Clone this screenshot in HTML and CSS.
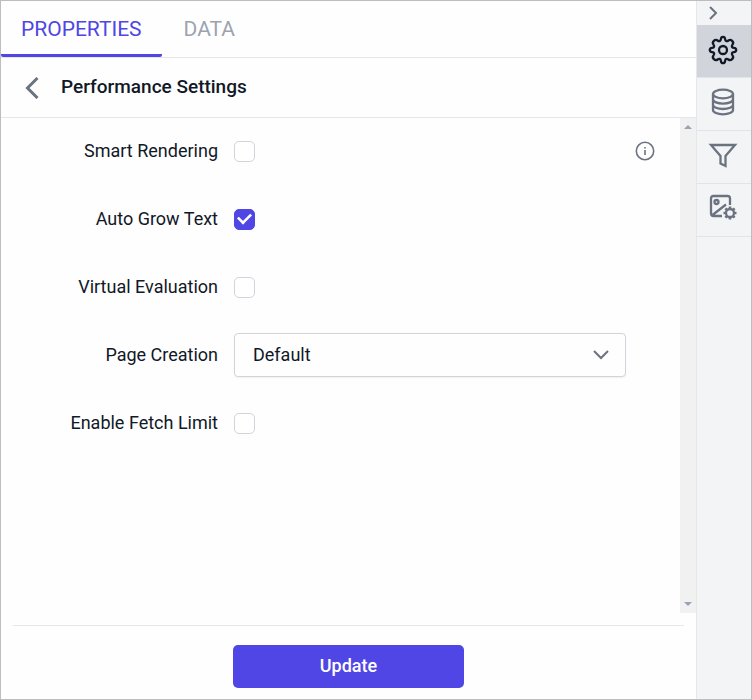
FILE: index.html
```
<!DOCTYPE html>
<html lang="en">

<head>
    <meta charset="utf-8">
    <title>Performance Settings</title>
    <link rel="stylesheet" href="styles.css">
</head>

<body>
<div class="designer">
    <main class="panel">
        <nav class="tabs">
            <button type="button" class="tab active">PROPERTIES</button>
            <button type="button" class="tab">DATA</button>
        </nav>
        <header class="panel-header">
            <button type="button" class="back" aria-label="Back">
                <svg width="14" height="22" viewBox="0 0 14 22"><path d="M12.5 1 2.500 11l10 10"/></svg>
            </button>
            <h1>Performance Settings</h1>
        </header>
        <form class="settings" id="settingsForm">
            <div class="fields">
                <div class="row">
                    <label for="smartRendering">Smart Rendering</label>
                    <input type="checkbox" id="smartRendering">
                    <button type="button" class="info" aria-label="Information">
                        <svg width="20" height="20" viewBox="0 0 20 20">
                            <circle cx="10" cy="10" r="8.7"/>
                            <path d="M10 9v5M10 6v1.6"/>
                        </svg>
                    </button>
                </div>
                <div class="row">
                    <label for="autoGrowText">Auto Grow Text</label>
                    <input type="checkbox" id="autoGrowText" checked>
                </div>
                <div class="row">
                    <label for="virtualEvaluation">Virtual Evaluation</label>
                    <input type="checkbox" id="virtualEvaluation">
                </div>
                <div class="row">
                    <label for="pageCreation">Page Creation</label>
                    <div class="select-box">
                        <select id="pageCreation">
                            <option selected>Default</option>
                        </select>
                        <svg class="caret" width="18" height="12" viewBox="0 0 18 12"><path d="m2 2 7 7 7-7"/></svg>
                    </div>
                </div>
                <div class="row">
                    <label for="enableFetchLimit">Enable Fetch Limit</label>
                    <input type="checkbox" id="enableFetchLimit">
                </div>
            </div>
            <div class="scrollbar" aria-hidden="true">
                <svg width="8" height="4" viewBox="0 0 8 4"><path d="M0 4 4 0l4 4z"/></svg>
                <svg width="8" height="4" viewBox="0 0 8 4"><path d="M0 0h8L4 4z"/></svg>
            </div>
        </form>
        <footer class="panel-footer">
            <button type="submit" form="settingsForm" class="update">Update</button>
        </footer>
    </main>
    <aside class="sidebar">
        <button type="button" class="collapse" aria-label="Collapse">
            <svg width="10" height="14" viewBox="0 0 10 14"><path d="m2 1 6 6-6 6"/></svg>
        </button>
        <button type="button" class="tool active" aria-label="Properties">
            <svg width="30" height="30" viewBox="0 0 30 30">
                <path d="M12.9 4.2C13.2 1 16.8 1 17.1 4.2C17.3 6.2 18.8 6.7 20.4 5.5C22.9 3.5 26.5 7.1 24.5 9.6C23.3 11.2 23.8 12.7 25.8 12.9C29 13.2 29 16.8 25.8 17.1C23.8 17.3 23.3 18.8 24.5 20.4C26.5 22.9 22.9 26.5 20.4 24.5C18.8 23.3 17.3 23.8 17.1 25.8C16.8 29 13.2 29 12.9 25.8C12.7 23.8 11.2 23.3 9.6 24.5C7.1 26.5 3.5 22.9 5.5 20.4C6.7 18.8 6.2 17.3 4.2 17.1C1 16.8 1 13.2 4.2 12.9C6.2 12.7 6.7 11.2 5.5 9.6C3.5 7.1 7.1 3.5 9.6 5.5C11.2 6.7 12.7 6.2 12.9 4.2Z"/>
                <circle cx="15" cy="15" r="4"/>
            </svg>
        </button>
        <button type="button" class="tool" aria-label="Data">
            <svg width="30" height="30" viewBox="0 0 30 30">
                <ellipse cx="15" cy="6" rx="10" ry="4.3"/>
                <path d="M5 6v16c0 2.4 4.5 4.3 10 4.3s10-1.9 10-4.3V6M5 11.3c0 2.4 4.5 4.3 10 4.3s10-1.9 10-4.3M5 16.700C5 19.100 9.500 21 15 21s10-1.900 10-4.300"/>
            </svg>
        </button>
        <button type="button" class="tool" aria-label="Filter">
            <svg width="30" height="30" viewBox="0 0 30 30">
                <path d="M3 4h24l-9.500 11v10l-5-2.500V15z"/>
            </svg>
        </button>
        <button type="button" class="tool" aria-label="Image settings">
            <svg width="30" height="30" viewBox="0 0 30 30">
                <path d="M14 22H5.500Q3 22 3 19.500V4.500Q3 2 5.500 2h14Q22 2 22 4.500V11M4.500 21 18 10.500"/>
                <circle cx="8.500" cy="8" r="2"/>
                <circle cx="22" cy="19" r="4"/>
                <path class="teeth" d="M22 15v-2.500M22 23v2.500M18 19h-2.500M26 19h2.500M19.200 16.200l-1.800-1.800M24.800 21.800l1.800 1.800M19.200 21.800l-1.800 1.800M24.800 16.200l1.800-1.800"/>
            </svg>
        </button>
    </aside>
</div>
</body>

</html>
```
FILE: styles.css
```
* {
    box-sizing: border-box;
}

body {
    margin: 0;
    font-family: Roboto, "Liberation Sans", sans-serif;
    font-size: 18px;
    color: #111827;
}

button,
select {
    font: inherit;
    color: inherit;
    background: none;
    border: none;
    padding: 0;
    cursor: pointer;
}

svg {
    display: block;
    fill: none;
    stroke: #6b7280;
    stroke-width: 2;
}

.designer {
    display: flex;
    min-height: 100vh;
    border: 1px solid #bdbdbd;
    background: #fefefe;
}

.panel {
    flex: 1;
    display: flex;
    flex-direction: column;
}

.tabs {
    display: flex;
    gap: 2px;
    height: 57px;
    border-bottom: 1px solid #e5e7eb;
}

.tab {
    padding: 2px 20px 0;
    font-size: 21px;
    color: #9ca3af;
    border-bottom: 3px solid transparent;
}

.tab.active {
    color: #4f46e5;
    border-color: #4f46e5;
    border-radius: 2px;
}

.panel-header {
    display: flex;
    align-items: center;
    gap: 22px;
    height: 60px;
    padding-left: 24px;
    border-bottom: 1px solid #e5e7eb;
}

.back svg {
    stroke-width: 3;
}

h1 {
    margin: 0;
    padding-bottom: 2px;
    font-size: 19px;
    font-weight: 500;
}

.settings {
    flex: 1;
    display: flex;
}

.fields {
    flex: 1;
    display: flex;
    flex-direction: column;
    gap: 24px;
    padding: 11px 25px 11px 0;
}

.row {
    display: flex;
    align-items: center;
    gap: 16px;
    height: 44px;
}

.row label {
    width: 217px;
    padding-bottom: 2px;
    text-align: right;
}

input[type="checkbox"] {
    appearance: none;
    width: 21px;
    height: 21px;
    margin: 0;
    border: 1px solid #d1d5db;
    border-radius: 5px;
    background: #fff;
}

input[type="checkbox"]:checked {
    border-color: #4f46e5;
    background: #4f46e5;
    display: grid;
    place-items: center;
}

/* tick mark */
input[type="checkbox"]:checked::before {
    content: "";
    width: 12px;
    height: 7px;
    margin-bottom: 4px;
    border-left: 3px solid #fff;
    border-bottom: 3px solid #fff;
    transform: rotate(-45deg) scale(0.85);
}

.info {
    margin-left: auto;
}

.info svg {
    stroke-width: 1.6;
}

.select-box {
    position: relative;
    flex: 1;
    margin-right: 29px;
}

.select-box select {
    appearance: none;
    width: 100%;
    height: 44px;
    padding: 0 18px 2px;
    border: 1px solid #d1d5db;
    border-radius: 4px;
    background: #fefefe;
    box-shadow: 0 1px 2px rgba(0, 0, 0, 0.06);
}

.caret {
    position: absolute;
    right: 16px;
    top: 16px;
    pointer-events: none;
}

.scrollbar {
    display: flex;
    flex-direction: column;
    justify-content: space-between;
    align-items: center;
    width: 16px;
    padding: 7px 0;
    background: #f1f1f1;
}

.scrollbar svg {
    fill: #94a3b8;
    stroke: none;
}

.panel-footer {
    display: flex;
    justify-content: center;
    margin: 12px 12px 0;
    padding: 19px 0 11px;
    border-top: 1px solid #e5e7eb;
}

.update {
    width: 231px;
    height: 43px;
    padding-bottom: 2px;
    border-radius: 5px;
    font-weight: 500;
    color: #fff;
    background: #4f46e5;
}

.sidebar {
    display: flex;
    flex-direction: column;
    width: 55px;
    border-left: 1px solid #e5e7eb;
    background: #f3f4f6;
}

.collapse {
    height: 24px;
    padding-left: 11px;
}

.tool {
    display: grid;
    place-items: center;
    height: 53px;
    padding: 0 2px 2px 0;
    border-bottom: 1px solid #e1e4e9;
}

.tool svg {
    stroke-width: 2.3;
}

.tool.active {
    background: #d1d5db;
}

.tool.active svg {
    stroke: #111827;
}

.tool .teeth {
    stroke-width: 2.6;
}
```
